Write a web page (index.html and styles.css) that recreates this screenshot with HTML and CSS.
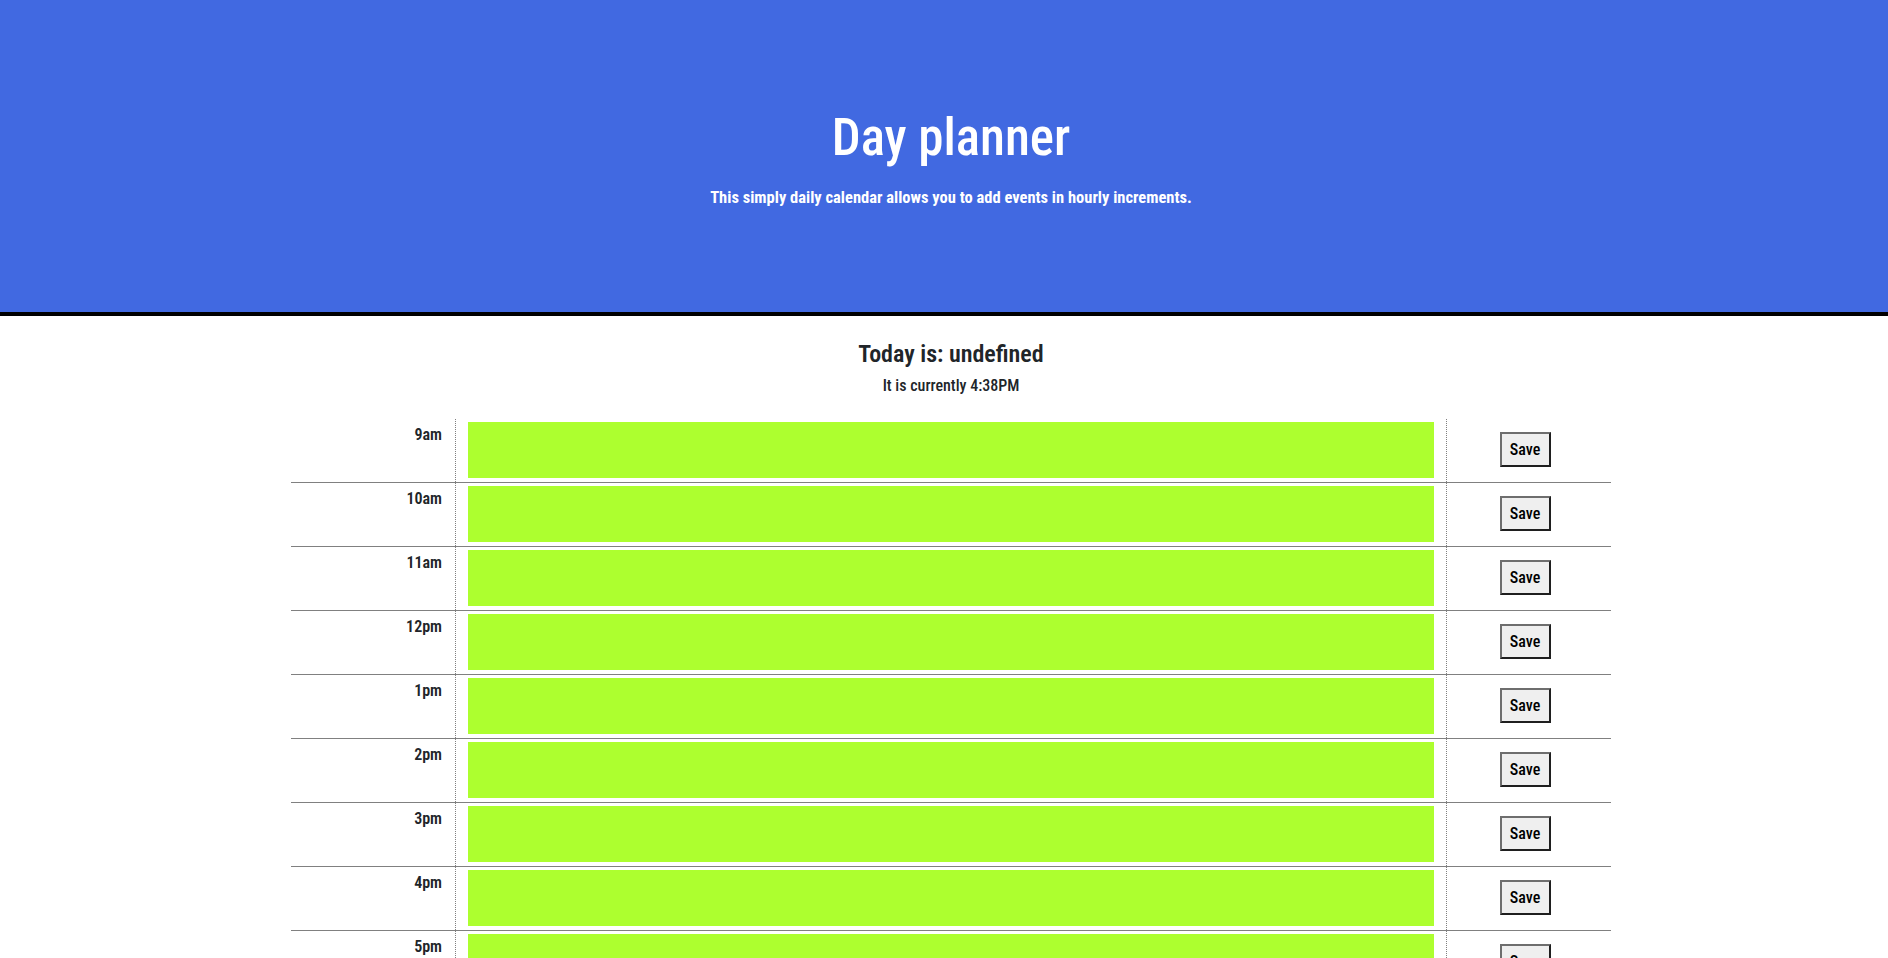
FILE: index.html
```html
<!DOCTYPE html>
<html lang="en">
<head>
<meta charset="utf-8">
<title>Day planner</title>
<link rel="stylesheet" href="styles.css">
</head>
<body>
<header class="hero">
  <h1 class="hero-title">Day planner</h1>
  <p class="hero-lead">This simply daily calendar allows you to add events in hourly increments.</p>
</header>
<main class="planner">
  <h2 class="today">Today is: undefined</h2>
  <p class="now">It is currently 4:38PM</p>
  <div class="schedule">
    <div class="time-row"><div class="hour">9am</div><div class="slot"><textarea class="entry"></textarea></div><div class="save-cell"><button class="save-btn">Save</button></div></div>
    <div class="time-row"><div class="hour">10am</div><div class="slot"><textarea class="entry"></textarea></div><div class="save-cell"><button class="save-btn">Save</button></div></div>
    <div class="time-row"><div class="hour">11am</div><div class="slot"><textarea class="entry"></textarea></div><div class="save-cell"><button class="save-btn">Save</button></div></div>
    <div class="time-row"><div class="hour">12pm</div><div class="slot"><textarea class="entry"></textarea></div><div class="save-cell"><button class="save-btn">Save</button></div></div>
    <div class="time-row"><div class="hour">1pm</div><div class="slot"><textarea class="entry"></textarea></div><div class="save-cell"><button class="save-btn">Save</button></div></div>
    <div class="time-row"><div class="hour">2pm</div><div class="slot"><textarea class="entry"></textarea></div><div class="save-cell"><button class="save-btn">Save</button></div></div>
    <div class="time-row"><div class="hour">3pm</div><div class="slot"><textarea class="entry"></textarea></div><div class="save-cell"><button class="save-btn">Save</button></div></div>
    <div class="time-row"><div class="hour">4pm</div><div class="slot"><textarea class="entry"></textarea></div><div class="save-cell"><button class="save-btn">Save</button></div></div>
    <div class="time-row"><div class="hour">5pm</div><div class="slot"><textarea class="entry"></textarea></div><div class="save-cell"><button class="save-btn">Save</button></div></div>
  </div>
</main>
</body>
</html>
```
FILE: styles.css
```css
html, body {
  margin: 0;
  padding: 0;
  background: #ffffff;
}

body {
  font-family: "Liberation Sans Narrow", "Roboto Condensed", "Liberation Sans", sans-serif;
  color: #212529;
}

.hero {
  height: 205px;
  padding: 107px 0 0 14px;
  background: #4169e1;
  border-bottom: 4px solid #000000;
  text-align: center;
  color: #ffffff;
}

.hero-title {
  margin: 0;
  font-size: 51px;
  line-height: 1.2;
  font-weight: 500;
}

.hero-lead {
  margin: 20px 0 0;
  font-size: 16.5px;
  line-height: 1.2;
  font-weight: 700;
}

.planner {
  padding: 24px 0 0 14px;
  text-align: center;
}

.today {
  margin: 0;
  font-size: 24px;
  line-height: 1.2;
  font-weight: 600;
}

.now {
  margin: 7px 0 0;
  font-size: 16px;
  line-height: 1.2;
  font-weight: 500;
}

.schedule {
  width: 1320px;
  margin: 24px auto 0;
  text-align: left;
}

.time-row {
  display: grid;
  grid-template-columns: 164px 1fr 164px;
  height: 63px;
  border-bottom: 1px solid #808080;
}

.hour {
  padding: 4px 13px 0 0;
  text-align: right;
  font-size: 16px;
  line-height: 24px;
  font-weight: 600;
}

.slot {
  display: flex;
  align-items: flex-start;
  padding: 3px 12px 4px;
  border-left: 1px dotted #808080;
  border-right: 1px dotted #808080;
}

.entry {
  flex: 1;
  display: block;
  box-sizing: border-box;
  height: 56px;
  margin: 0;
  padding: 2px;
  border: none;
  background: #adff2f;
  resize: none;
  font-family: inherit;
}

.save-cell {
  display: flex;
  justify-content: center;
  align-items: flex-start;
  padding: 13px 8px 0 0;
}

.save-btn {
  width: 51px;
  height: 35px;
  padding: 0;
  font-family: inherit;
  font-size: 16px;
  font-weight: 500;
  color: #000000;
  background: #efefef;
  border: 2px solid;
  border-color: #6e6e6e #1f1f1f #1f1f1f #6e6e6e;
}
```
